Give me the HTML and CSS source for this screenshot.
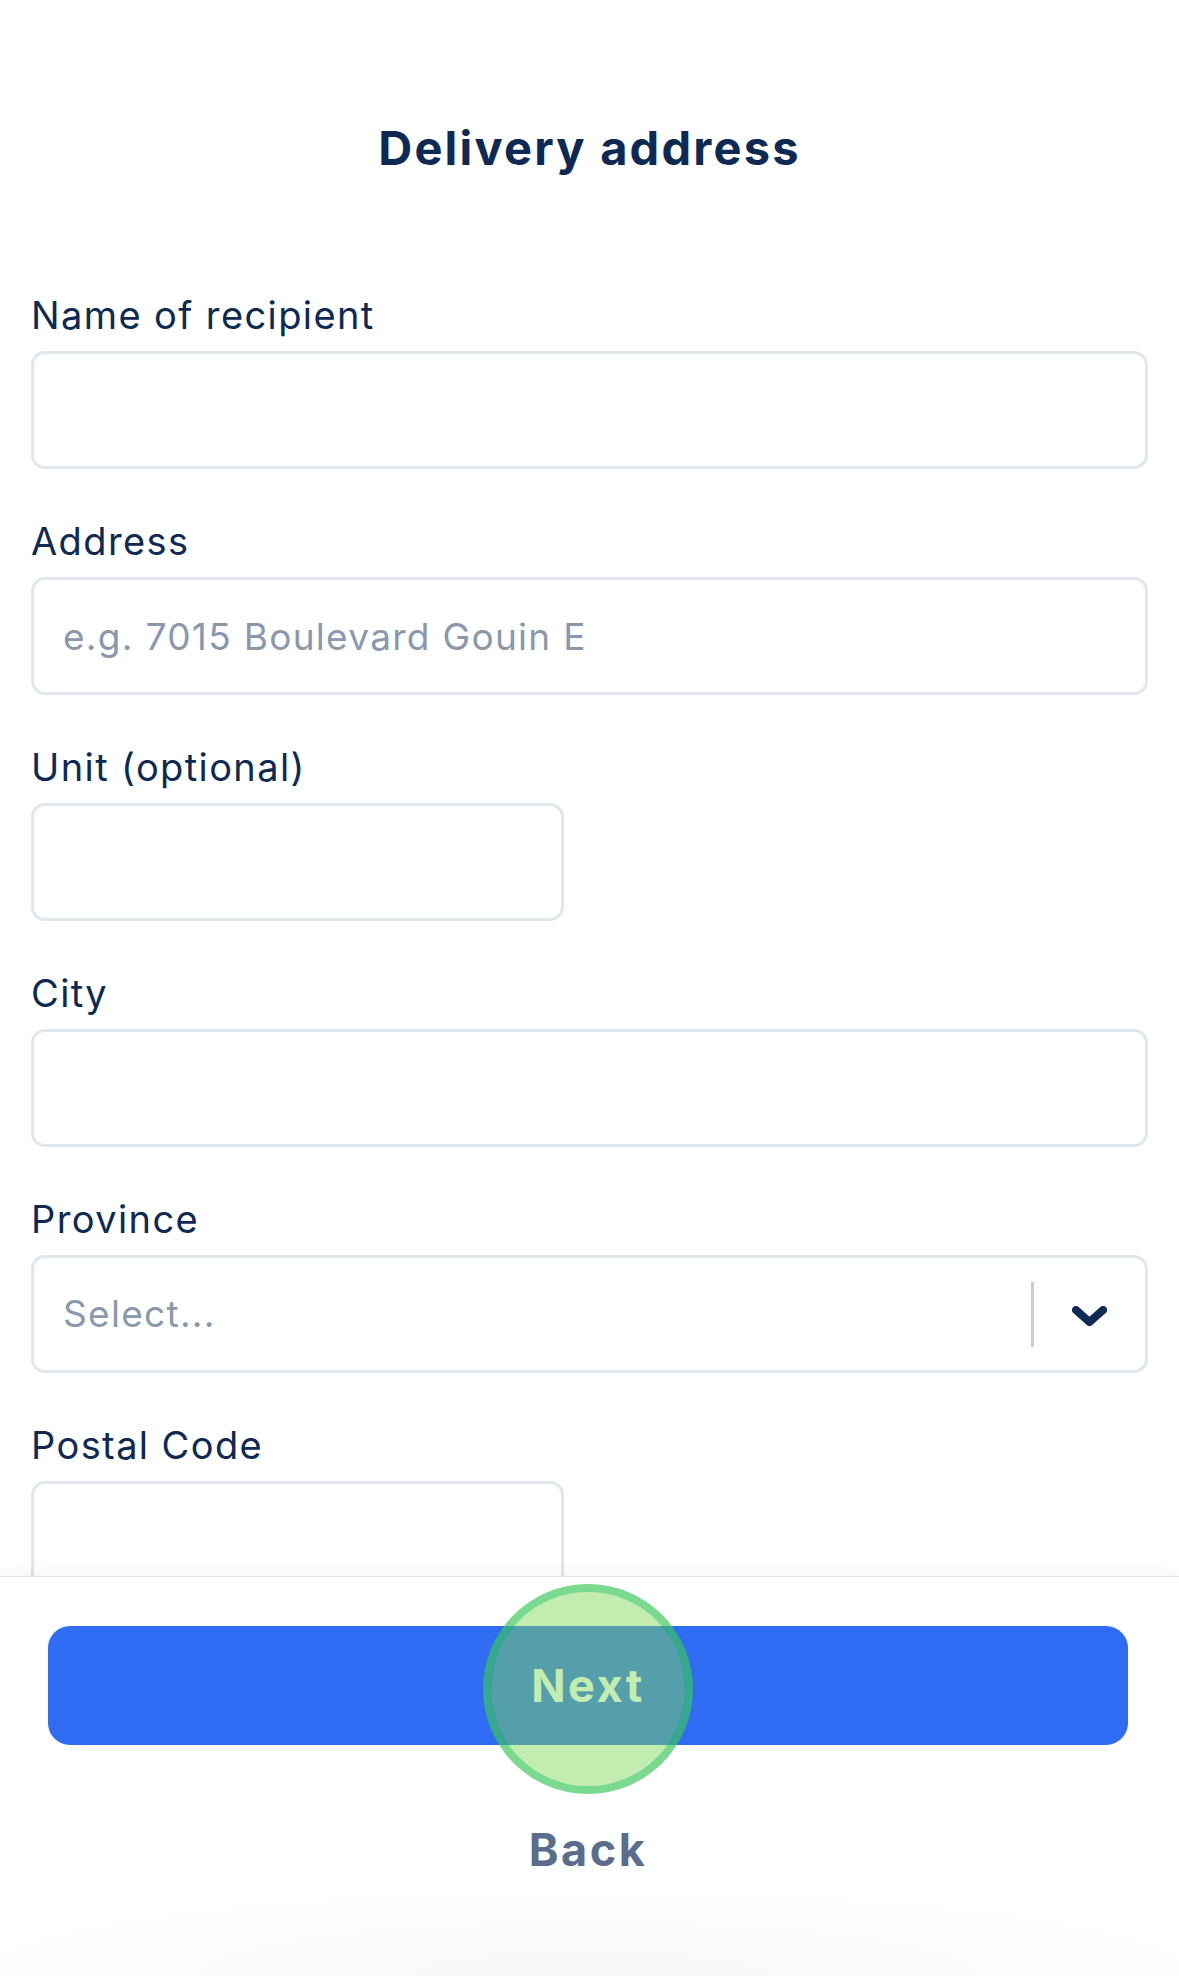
FILE: index.html
```html
<!DOCTYPE html>
<html lang="en">
<head>
<meta charset="utf-8">
<title>Delivery address</title>
<link rel="stylesheet" href="styles.css">
</head>
<body>
<div class="screen">
  <main class="form">
    <h1 class="title">Delivery address</h1>

    <div class="field">
      <label class="label" for="name">Name of recipient</label>
      <input class="input" id="name" type="text">
    </div>

    <div class="field">
      <label class="label" for="address">Address</label>
      <input class="input" id="address" type="text" placeholder="e.g. 7015 Boulevard Gouin E">
    </div>

    <div class="field">
      <label class="label" for="unit">Unit (optional)</label>
      <input class="input input-half" id="unit" type="text">
    </div>

    <div class="field">
      <label class="label" for="city">City</label>
      <input class="input" id="city" type="text">
    </div>

    <div class="field">
      <label class="label">Province</label>
      <div class="select">
        <span class="select-value">Select...</span>
        <span class="select-divider"></span>
        <span class="select-indicator">
          <svg width="35" height="20" viewBox="0 0 35 20" aria-hidden="true"><path d="M4 4 L17.5 16 L31 4" fill="none" stroke="#0e2a55" stroke-width="8" stroke-linecap="round" stroke-linejoin="round"/></svg>
        </span>
      </div>
    </div>

    <div class="field">
      <label class="label" for="postal">Postal Code</label>
      <input class="input input-half" id="postal" type="text">
    </div>
  </main>

  <footer class="footer">
    <div class="btn-wrap">
      <button class="btn-primary" type="button">Next</button>
      <span class="touch"></span>
    </div>
    <button class="btn-link" type="button">Back</button>
  </footer>
</div>
</body>
</html>
```

FILE: styles.css
```css
* {
  box-sizing: border-box;
}

html, body {
  margin: 0;
  padding: 0;
  background: #ffffff;
}

body {
  font-family: Inter, "Noto Sans", sans-serif;
  color: #0e2952;
}

.screen {
  width: 1179px;
  height: 1976px;
  display: flex;
  flex-direction: column;
  overflow: hidden;
}

.form {
  flex: 1 1 auto;
  overflow: hidden;
  padding: 121px 31px 0;
  display: flex;
  flex-direction: column;
}

.title {
  margin: 0 0 118px;
  font-size: 47px;
  line-height: 54px;
  font-weight: 700;
  text-align: center;
  color: #0e2952;
  letter-spacing: 2.2px;
}

.field {
  display: flex;
  flex-direction: column;
  align-items: flex-start;
  margin-bottom: 50px;
  flex: none;
}

.label {
  font-size: 38px;
  line-height: 44px;
  font-weight: 400;
  color: #0e2952;
  margin-bottom: 14px;
  letter-spacing: 1.4px;
}

.input {
  width: 100%;
  height: 118px;
  border: 3px solid #e0e7ef;
  border-radius: 14px;
  background: #fff;
  padding: 0 29px;
  font-family: inherit;
  font-size: 37px;
  letter-spacing: 1.3px;
  color: #0e2952;
  outline: none;
}

.input::placeholder {
  color: #8a98ad;
  opacity: 1;
}

.input-half {
  width: 533px;
}

.select {
  width: 100%;
  height: 118px;
  border: 3px solid #e0e7ef;
  border-radius: 14px;
  background: #fff;
  display: flex;
  align-items: center;
  padding-left: 29px;
}

.select-value {
  flex: 1 1 auto;
  font-size: 37px;
  line-height: 44px;
  letter-spacing: 1.3px;
  color: #8a98ad;
}

.select-divider {
  width: 3px;
  height: 65px;
  background: #cccccc;
  flex: none;
}

.select-indicator {
  width: 111px;
  flex: none;
  display: flex;
  align-items: center;
  justify-content: center;
  padding-top: 3px;
}

.select-indicator svg {
  display: block;
}

.footer {
  flex: none;
  height: 400px;
  position: relative;
  padding: 49px 51px 0 48px;
  border-top: 1px solid #e9e9e9;
  box-shadow: 0 -5px 14px rgba(0, 0, 0, 0.045);
  background: radial-gradient(ellipse 55% 90px at 50% 100%, #f7f7f7, #ffffff);
  display: flex;
  flex-direction: column;
  align-items: center;
}

.btn-wrap {
  position: relative;
  width: 100%;
}

.btn-primary {
  display: block;
  width: 100%;
  height: 119px;
  border: none;
  border-radius: 22px;
  background: #2f6bf3;
  color: #ffffff;
  font-family: inherit;
  font-size: 45px;
  font-weight: 700;
  line-height: 54px;
  letter-spacing: 2.5px;
  padding: 0;
  cursor: pointer;
}

.touch {
  position: absolute;
  left: 50%;
  top: 50%;
  width: 210px;
  height: 210px;
  margin-left: -105px;
  margin-top: -102px;
  border-radius: 50%;
  border: 8px solid rgba(56, 199, 90, 0.68);
  background: rgba(127, 215, 89, 0.48);
  background-clip: padding-box;
  pointer-events: none;
}

.btn-link {
  margin-top: 78px;
  border: none;
  background: transparent;
  font-family: inherit;
  font-size: 45px;
  line-height: 54px;
  font-weight: 700;
  letter-spacing: 2.5px;
  color: #5a6d8a;
  padding: 0;
  cursor: pointer;
}
```
